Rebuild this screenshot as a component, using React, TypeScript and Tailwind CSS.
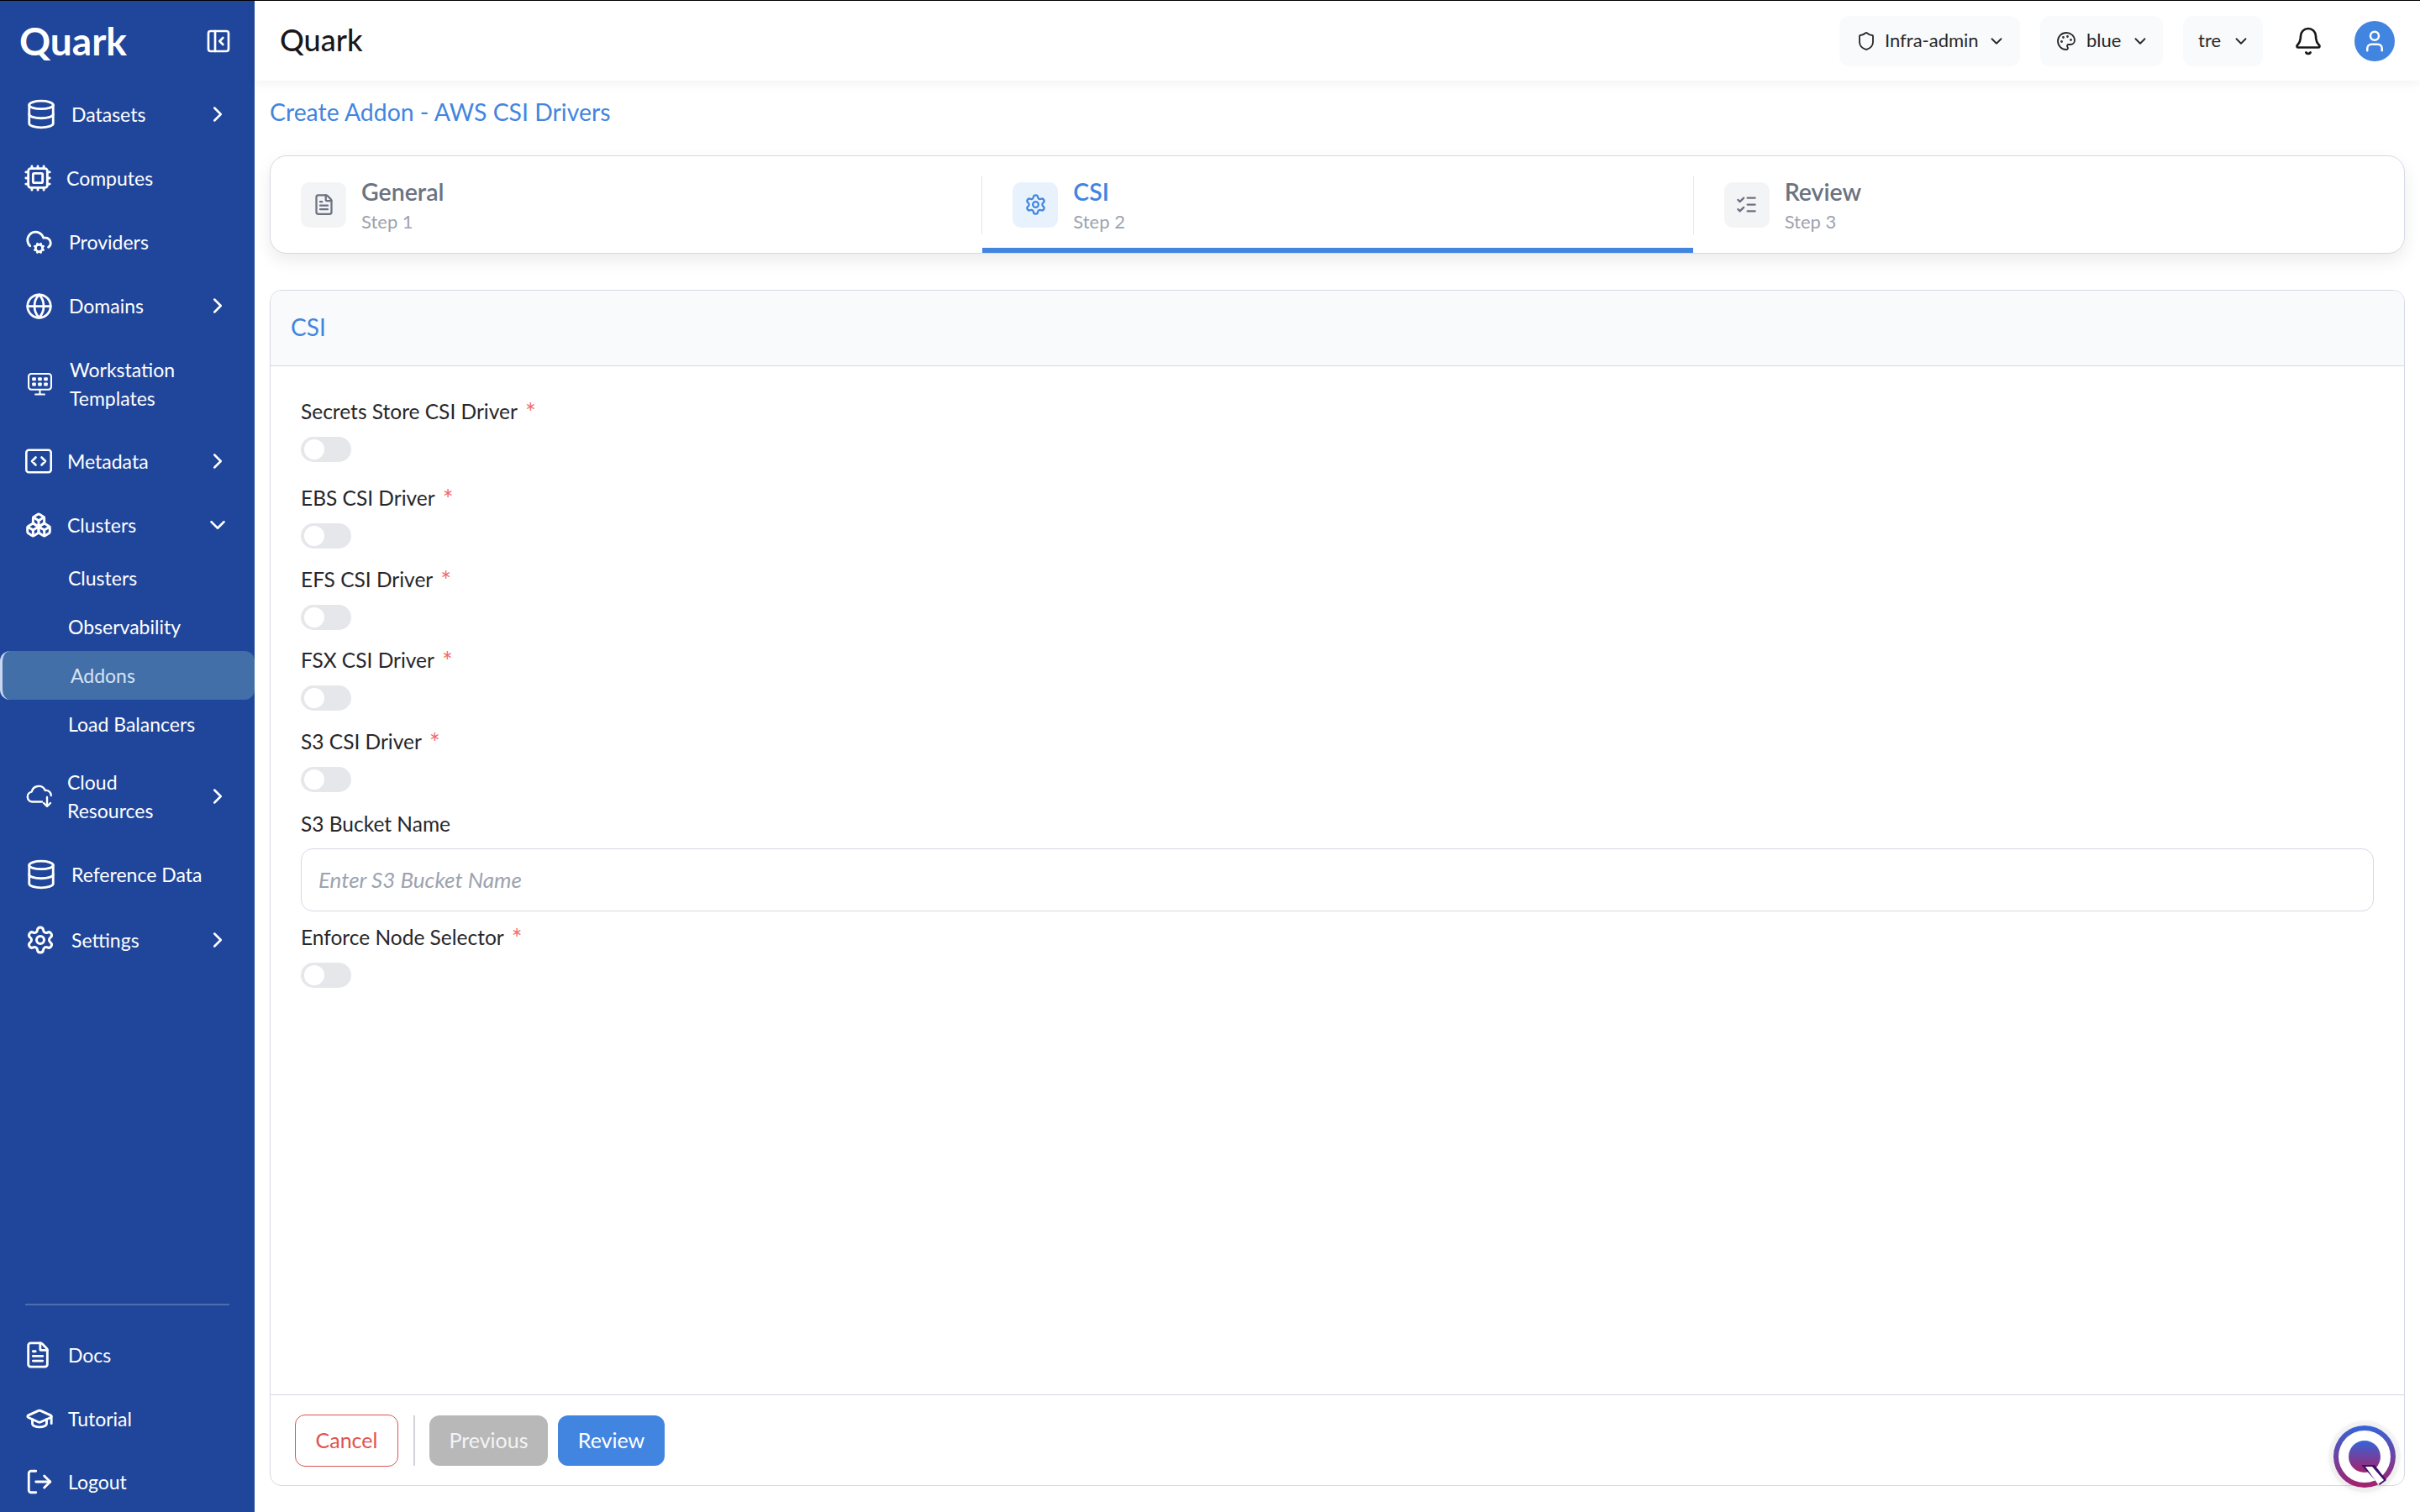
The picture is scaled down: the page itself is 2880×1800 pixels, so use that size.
import type { ReactNode } from "react";
import {
  Bell,
  Boxes,
  ChevronDown,
  ChevronRight,
  CloudCog,
  Cpu,
  Database,
  FileText,
  Globe,
  GraduationCap,
  ListChecks,
  LogOut,
  PanelLeftClose,
  Palette,
  Settings,
  Shield,
  User,
} from "lucide-react";

const MonitorGrid = ({ className }: { className?: string }) => (
  <svg viewBox="0 0 28 26" fill="none" stroke="currentColor" strokeWidth="2" className={className}>
    <rect x="1" y="1" width="26" height="18" rx="3" />
    <path d="M14 19v5M8 24.5h12" />
    <g fill="currentColor" stroke="none">
      <rect x="5" y="5" width="4.5" height="4" rx="1" />
      <rect x="11.7" y="5" width="4.5" height="4" rx="1" />
      <rect x="18.5" y="5" width="4.5" height="4" rx="1" />
      <rect x="5" y="11" width="4.5" height="4" rx="1" />
      <rect x="11.7" y="11" width="4.5" height="4" rx="1" />
      <rect x="18.5" y="11" width="4.5" height="4" rx="1" />
    </g>
  </svg>
);

const CodeBox = ({ className }: { className?: string }) => (
  <svg viewBox="0 0 32 30" fill="none" stroke="currentColor" strokeWidth="2.6" strokeLinecap="round" strokeLinejoin="round" className={className}>
    <rect x="1.3" y="1.8" width="29.4" height="26.4" rx="3" />
    <path d="M12.5 10.5L8 15l4.5 4.5M19.5 10.5L24 15l-4.5 4.5" />
  </svg>
);

const CloudArrow = ({ className }: { className?: string }) => (
  <svg viewBox="0 0 32 28" fill="none" stroke="currentColor" strokeWidth="2.4" strokeLinecap="round" strokeLinejoin="round" className={className}>
    <path d="M19 20.5H7.5a6 6 0 0 1-.8-11.9A8.5 8.5 0 0 1 22.8 7a6 6 0 0 1 7 6" />
    <path d="M25 15v10.5M21 22l4 4 4-4" />
  </svg>
);

const NavRow = ({
  icon,
  children,
  className,
  gap,
  chevron,
}: {
  icon: ReactNode;
  children: ReactNode;
  className: string;
  gap: string;
  chevron?: "right" | "down";
}) => (
  <div className={`flex items-center pr-[29px] text-[23px] text-white ${className}`}>
    <div className={`flex flex-1 items-center ${gap}`}>
      {icon}
      <div className="leading-[34px]">{children}</div>
    </div>
    {chevron === "right" && <ChevronRight size={30} strokeWidth={2} />}
    {chevron === "down" && <ChevronDown size={30} strokeWidth={2} />}
  </div>
);

const Sidebar = () => (
  <aside className="flex h-full w-[303px] shrink-0 flex-col bg-[#20469b]">
    <div className="flex h-[97px] shrink-0 items-center justify-between pb-[2px] pl-[23px] pr-[27px]">
      <div className="text-[46px] font-bold leading-none text-white">Quark</div>
      <PanelLeftClose size={32} strokeWidth={2} className="text-white" />
    </div>
    <NavRow className="h-[76px] pl-[30px]" gap="gap-[17px]" chevron="right" icon={<Database size={38} strokeWidth={1.8} />}>
      Datasets
    </NavRow>
    <NavRow className="h-[76px] pl-[28px]" gap="gap-[17px]" icon={<Cpu size={34} strokeWidth={2} />}>
      Computes
    </NavRow>
    <NavRow className="h-[76px] pl-[30px]" gap="gap-[19px]" icon={<CloudCog size={33} strokeWidth={2} />}>
      Providers
    </NavRow>
    <NavRow className="h-[76px] pl-[30px]" gap="gap-[19px]" chevron="right" icon={<Globe size={33} strokeWidth={2} />}>
      Domains
    </NavRow>
    <NavRow className="h-[110px] pl-[33px]" gap="gap-[21px]" icon={<MonitorGrid className="h-[27px] w-[29px]" />}>
      <div>Workstation</div>
      <div>Templates</div>
    </NavRow>
    <NavRow className="h-[74px] pl-[30px]" gap="gap-[18px]" chevron="right" icon={<CodeBox className="h-[30px] w-[32px]" />}>
      Metadata
    </NavRow>
    <NavRow className="h-[73px] pl-[30px] pt-[4px]" gap="gap-[18px]" chevron="down" icon={<Boxes size={32} strokeWidth={2.2} />}>
      Clusters
    </NavRow>
    <div className="flex h-[58px] items-center pl-[81px] text-[23px] text-white">Clusters</div>
    <div className="flex h-[58px] items-center pl-[81px] text-[23px] text-white">Observability</div>
    <div className="flex h-[58px] items-center rounded-[12px] border-l-[3px] border-[#c9d6ee] bg-[#426fa8] pl-[81px] text-[23px] text-[#d8e2f2]">
      Addons
    </div>
    <div className="flex h-[58px] items-center pl-[81px] text-[23px] text-white">Load Balancers</div>
    <NavRow className="h-[114px] pl-[31px]" gap="gap-[17px]" chevron="right" icon={<CloudArrow className="h-[28px] w-[32px]" />}>
      <div>Cloud</div>
      <div>Resources</div>
    </NavRow>
    <NavRow className="h-[72px] pl-[30px]" gap="gap-[17px]" icon={<Database size={38} strokeWidth={1.8} />}>
      Reference Data
    </NavRow>
    <NavRow className="h-[84px] pl-[30px]" gap="gap-[19px]" chevron="right" icon={<Settings size={36} strokeWidth={2} />}>
      Settings
    </NavRow>
    <div className="mt-auto mx-[30px] h-[2px] bg-[#4f6cb0]" />
    <div className="mt-[21px]">
      <NavRow className="h-[76px] pl-[28px]" gap="gap-[19px]" icon={<FileText size={34} strokeWidth={2} />}>
        Docs
      </NavRow>
      <NavRow className="h-[76px] pl-[30px]" gap="gap-[17px]" icon={<GraduationCap size={34} strokeWidth={2} />}>
        Tutorial
      </NavRow>
      <NavRow className="h-[73px] pl-[30px]" gap="gap-[17px]" icon={<LogOut size={34} strokeWidth={2} />}>
        Logout
      </NavRow>
    </div>
  </aside>
);

const HeaderSelect = ({ icon, label, className }: { icon?: ReactNode; label: string; className: string }) => (
  <div className={`flex h-[60px] items-center rounded-[12px] bg-[#f9fafb] text-[22px] text-[#27272a] ${className}`}>
    {icon}
    <span className="whitespace-nowrap pb-[2px]">{label}</span>
    <ChevronDown size={22} strokeWidth={2} />
  </div>
);

const Header = () => (
  <header className="relative z-10 flex h-[95px] shrink-0 items-center bg-white pl-[30px] pr-[30px] shadow-[0_4px_12px_rgba(0,0,0,0.05)]">
    <div className="flex-1 pb-[3px] text-[36px] font-medium text-[#18181b]">Quark</div>
    <HeaderSelect
      className="w-[215px] gap-[10px] pl-[20px]"
      icon={<Shield size={24} strokeWidth={1.8} />}
      label="Infra-admin"
    />
    <HeaderSelect
      className="ml-[24px] w-[146px] gap-[12px] pl-[19px]"
      icon={<Palette size={24} strokeWidth={1.8} />}
      label="blue"
    />
    <HeaderSelect className="ml-[24px] w-[95px] gap-[13px] pl-[18px]" label="tre" />
    <Bell size={36} strokeWidth={1.8} className="ml-[36px] text-[#18181b]" />
    <div className="ml-[37px] flex h-[48px] w-[48px] items-center justify-center rounded-full bg-[#4285e0] text-white">
      <User size={30} strokeWidth={2} />
    </div>
  </header>
);

const StepTab = ({
  icon,
  title,
  step,
  active,
  divider,
}: {
  icon: ReactNode;
  title: string;
  step: string;
  active?: boolean;
  divider?: boolean;
}) => (
  <div className="flex flex-1 items-center">
    {divider && <div className="h-[70px] w-px bg-[#e5e7eb]" />}
    <div
      className={`flex h-full flex-1 items-center border-y-[6px] border-t-transparent pl-[36px] ${
        active ? "border-b-[#4285e0]" : "border-b-transparent"
      }`}
    >
      <div
        className={`flex h-[54px] w-[54px] items-center justify-center rounded-[10px] ${
          active ? "bg-[#e8f2fc] text-[#4285e0]" : "bg-[#f3f4f6] text-[#6b7280]"
        }`}
      >
        {icon}
      </div>
      <div className="ml-[18px] pt-[3px]">
        <div className={`text-[28.5px] font-semibold leading-[36px] ${active ? "text-[#4285e0]" : "text-[#6b7280]"}`}>
          {title}
        </div>
        <div className="mt-[1px] text-[22px] leading-[34px] text-[#9ca3af]">{step}</div>
      </div>
    </div>
  </div>
);

const Label = ({ text, required }: { text: string; required?: boolean }) => (
  <div className="flex h-[34px] items-center text-[24.5px] text-[#27272a]">
    {text}
    {required && <span className="ml-[9px] h-[34px] text-[30px] leading-[34px] text-[#ef6b6b]">*</span>}
  </div>
);

const ToggleField = ({ text, className }: { text: string; className: string }) => (
  <div className={className}>
    <Label text={text} required />
    <div className="mt-[13px] flex h-[30px] w-[60px] items-center rounded-full bg-[#e5e7eb] pl-[4px]">
      <div className="h-[24px] w-[24px] rounded-full bg-white" />
    </div>
  </div>
);

const QLogo = () => (
  <div className="absolute bottom-[29px] right-[29px] h-[74px] w-[74px] rounded-full shadow-[0_0_0_6px_rgba(0,0,0,0.03),0_2px_14px_rgba(0,0,0,0.08)]">
    <svg viewBox="0 0 74 74" className="h-full w-full">
      <defs>
        <linearGradient id="qg" x1="0" y1="0" x2="0" y2="1">
          <stop offset="0" stopColor="#3565d8" />
          <stop offset="1" stopColor="#a5216c" />
        </linearGradient>
      </defs>
      <circle cx="37" cy="37" r="37" fill="url(#qg)" />
      <circle cx="37" cy="37" r="31" fill="#fff" />
      <circle cx="37" cy="37" r="19" fill="url(#qg)" />
      <polygon points="33,47 49,47 63,65 55,71" fill="#3f0f6e" />
      <polygon points="38,49 46,49 60,65 53,70" fill="#fff" />
    </svg>
  </div>
);

export default function App() {
  return (
    <div className="flex h-screen w-full flex-col overflow-hidden border-t border-black bg-white font-['Lato',sans-serif]">
      <div className="flex min-h-0 flex-1">
        <Sidebar />
        <div className="relative flex min-w-0 flex-1 flex-col">
          <Header />
          <div className="flex min-h-0 flex-1 flex-col px-[18px] pb-[31px]">
            <div className="mt-[17px] text-[28.4px] leading-[40px] text-[#4285e0]">Create Addon - AWS CSI Drivers</div>
            <div className="mt-[32px] flex h-[117px] shrink-0 overflow-hidden rounded-[20px] border border-[#d5d9e4] bg-white shadow-[0_8px_20px_rgba(0,0,0,0.08)]">
              <StepTab title="General" step="Step 1" icon={<FileText size={27} strokeWidth={2} />} />
              <StepTab title="CSI" step="Step 2" active divider icon={<Settings size={27} strokeWidth={2} />} />
              <StepTab title="Review" step="Step 3" divider icon={<ListChecks size={27} strokeWidth={2} />} />
            </div>
            <div className="mt-[43px] flex min-h-0 flex-1 flex-col overflow-hidden rounded-[14px] border border-[#d5d9e4] bg-white">
              <div className="flex h-[90px] shrink-0 items-center border-b border-[#d5d9e4] bg-[#f9fafb] pb-[3px] pl-[24px] text-[28px] text-[#4285e0]">
                CSI
              </div>
              <div className="flex-1 px-[36px] pt-[37px]">
                <ToggleField text="Secrets Store CSI Driver" className="mb-[26px]" />
                <ToggleField text="EBS CSI Driver" className="mb-[20px]" />
                <ToggleField text="EFS CSI Driver" className="mb-[19px]" />
                <ToggleField text="FSX CSI Driver" className="mb-[20px]" />
                <ToggleField text="S3 CSI Driver" className="mb-[21px]" />
                <Label text="S3 Bucket Name" />
                <div className="mt-[12px] flex h-[75px] items-center rounded-[14px] border border-[#d5d9e4] pl-[20px] text-[26px] italic text-[#9ca3af]">
                  Enter S3 Bucket Name
                </div>
                <ToggleField text="Enforce Node Selector" className="mt-[14px]" />
              </div>
              <div className="flex h-[108px] shrink-0 items-center border-t border-[#d5d9e4] pl-[29px] text-[25px]">
                <button className="h-[62px] w-[123px] rounded-[12px] border border-[#e05252] text-[#e05252]">Cancel</button>
                <div className="ml-[18px] h-[60px] w-[2px] bg-[#d1d5db]" />
                <button className="ml-[17px] h-[60px] w-[141px] rounded-[12px] bg-[#b8b8b8] text-[#f3f4f6]">Previous</button>
                <button className="ml-[12px] h-[60px] w-[127px] rounded-[12px] bg-[#4285e0] text-white">Review</button>
              </div>
            </div>
          </div>
          <QLogo />
        </div>
      </div>
    </div>
  );
}
